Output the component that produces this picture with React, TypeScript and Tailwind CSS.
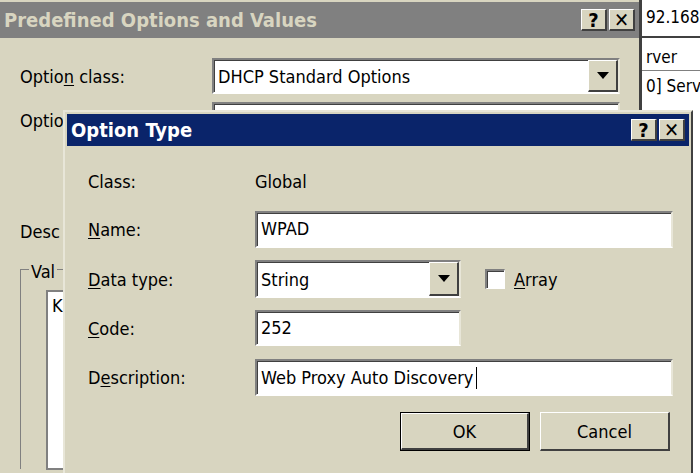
import React from "react";

const F = { fontFamily: "'DejaVu Sans Condensed','DejaVu Sans','Liberation Sans',sans-serif", fontStretch: "condensed" as const };

function Sunken({ className = "", children }: { className?: string; children?: React.ReactNode }) {
  return (
    <div className={"bg-white border-t-2 border-l-2 border-[#808080] border-b-2 border-r-2 border-b-white border-r-[#e8e6d8] shadow-[inset_1px_1px_0_#404040] flex items-center " + className}>
      {children}
    </div>
  );
}

function Arrow() {
  return (
    <div className="w-[30px] h-full bg-[#d8d5c0] border-t border-l border-white border-b-2 border-r-2 border-b-[#404040] border-r-[#404040] flex items-center justify-center">
      <svg width="12" height="7" viewBox="0 0 12 7"><path d="M0 0h12L6 7z" fill="#000" /></svg>
    </div>
  );
}

function TBtn({ c }: { c: string }) {
  return (
    <div className="w-[26px] h-[22px] bg-[#d8d5c0] border-t border-l border-white border-b-2 border-r-2 border-b-[#404040] border-r-[#404040] flex items-center justify-center text-[20px] font-bold text-black leading-none">
      {c}
    </div>
  );
}

function U({ c }: { c: string }) {
  return <span className="underline underline-offset-2">{c}</span>;
}

export default function App() {
  return (
    <div className="relative w-[700px] h-[473px] bg-[#d8d5c0] overflow-hidden text-[18px] text-black whitespace-nowrap" style={F}>
      {/* right window fragment */}
      <div className="absolute left-[640px] top-0 w-[60px] h-[473px] bg-white border-l-2 border-[#404040] overflow-hidden">
        <div className="h-[38px] border-b-2 border-[#404040] flex items-center pl-1 text-[17px]">92.168</div>
        <div className="pt-[6px] pl-1 text-[17px] leading-[26px] border-b border-[#808080]">rver</div>
        <div className="pl-1 text-[17px] leading-[30px]">0] Serv</div>
      </div>

      {/* back dialog */}
      <div className="absolute left-0 top-0 w-[640px] h-[473px] bg-[#d8d5c0] border-r border-[#404040]">
        <div className="h-[36px] mt-[2px] bg-[#808080] flex items-center justify-between pl-[4px] pr-[4px]">
          <span className="font-bold text-[20px] text-[#d8d5c0]">Predefined Options and Values</span>
          <div className="flex gap-[2px]"><TBtn c="?" /><TBtn c="✕" /></div>
        </div>
        <div className="flex items-center mt-[20px] ml-[20px]">
          <span className="w-[192px]">Optio<U c="n" /> class:</span>
          <Sunken className="w-[408px] h-[36px] pl-1 justify-between">
            <span>DHCP Standard Options</span>
            <Arrow />
          </Sunken>
        </div>
        <div className="flex items-center mt-[8px] ml-[20px]">
          <span className="w-[192px]">Optio<U c="n" /> name:</span>
          <Sunken className="w-[408px] h-[36px]" />
        </div>
        <div className="ml-[20px] mt-[80px]">Desc</div>
        <div className="ml-[20px] mt-[24px] h-[200px] border-l border-t border-[#808080] relative">
          <span className="absolute -top-[12px] left-[8px] bg-[#d8d5c0] px-[2px]">Val</span>
          <div className="ml-[25px] mt-[20px] w-[60px] h-[180px] bg-white border-2 border-[#808080] pl-1">K</div>
        </div>
      </div>

      {/* Option Type dialog */}
      <div className="absolute left-[63px] top-[110px] w-[630px] h-[363px] bg-[#d8d5c0] border-t-2 border-l-2 border-[#e8e6d8] border-r-2 border-r-[#404040] p-[2px]">
        <div className="h-[32px] bg-[#0a246a] flex items-center justify-between pl-[4px] pr-[4px]">
          <span className="font-bold text-[20px] text-white">Option Type</span>
          <div className="flex gap-[2px]"><TBtn c="?" /><TBtn c="✕" /></div>
        </div>
        <div className="pl-[21px] pt-[20px]">
          <div className="flex items-center h-[30px]">
            <span className="w-[167px]">Class:</span><span>Global</span>
          </div>
          <div className="flex items-center mt-[15px]">
            <span className="w-[167px]"><U c="N" />ame:</span>
            <Sunken className="w-[418px] h-[37px] pl-1 items-start pt-[2px]">WPAD</Sunken>
          </div>
          <div className="flex items-center mt-[12px]">
            <span className="w-[167px]"><U c="D" />ata type:</span>
            <Sunken className="w-[206px] h-[38px] pl-1 justify-between">
              <span>String</span><Arrow />
            </Sunken>
            <div className="ml-[24px] w-[20px] h-[20px] bg-white border-t-2 border-l-2 border-[#808080] border-b border-r border-b-white border-r-white shadow-[inset_1px_1px_0_#404040]" />
            <span className="ml-[9px]"><U c="A" />rray</span>
          </div>
          <div className="flex items-center mt-[12px]">
            <span className="w-[167px]"><U c="C" />ode:</span>
            <Sunken className="w-[206px] h-[36px] pl-1 items-start pt-[2px]">252</Sunken>
          </div>
          <div className="flex items-center mt-[13px]">
            <span className="w-[167px]">D<U c="e" />scription:</span>
            <Sunken className="w-[418px] h-[37px] pl-1">Web Proxy Auto Discovery<span className="ml-[3px] w-px h-[22px] bg-black" /></Sunken>
          </div>
          <div className="flex justify-end gap-[10px] mt-[16px] pr-[19px]">
            <div className="w-[130px] h-[39px] border border-black">
              <div className="w-full h-full bg-[#d8d5c0] border-t border-l border-white border-b-2 border-r-2 border-b-[#404040] border-r-[#404040] flex items-center justify-center">OK</div>
            </div>
            <div className="w-[130px] h-[39px] bg-[#d8d5c0] border-t border-l border-white border-b-2 border-r-2 border-b-[#404040] border-r-[#404040] flex items-center justify-center">Cancel</div>
          </div>
        </div>
      </div>
    </div>
  );
}
